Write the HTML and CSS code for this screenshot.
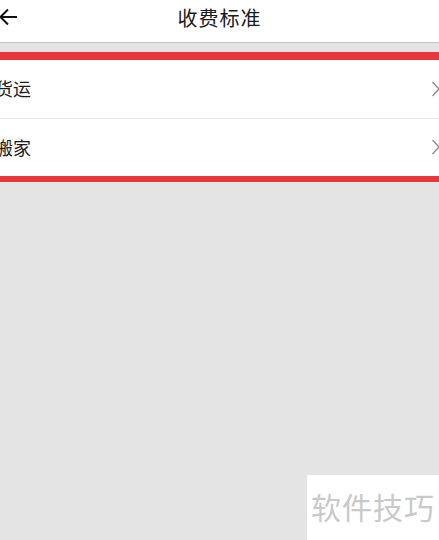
FILE: index.html
```html
<!DOCTYPE html>
<html lang="zh">
<head>
<meta charset="utf-8">
<title>收费标准</title>
<link rel="stylesheet" href="styles.css">
</head>
<body>
<div class="page">
  <header class="header">
    <svg class="back" width="20" height="18" viewBox="0 0 20 18">
      <path d="M18 9H1.5M9 1.5L1.5 9L9 16.5" fill="none" stroke="#111" stroke-width="2"/>
    </svg>
    <h1 class="title">收费标准</h1>
  </header>
  <div class="gap"></div>
  <ul class="list">
    <li class="row"><span class="label">货运</span>
      <svg class="chev" width="8" height="16" viewBox="0 0 8 16"><path d="M0.5 1L7 8L0.5 15" fill="none" stroke="#888" stroke-width="1.3"/></svg>
    </li>
    <li class="row"><span class="label">搬家</span>
      <svg class="chev" width="8" height="16" viewBox="0 0 8 16"><path d="M0.5 1L7 8L0.5 15" fill="none" stroke="#888" stroke-width="1.3"/></svg>
    </li>
  </ul>
  <div class="watermark">软件技巧</div>
</div>
</body>
</html>
```
FILE: styles.css
```css
* { box-sizing: border-box; margin: 0; padding: 0; }
html, body { width: 439px; height: 540px; overflow: hidden; }
body {
  background: #e4e4e4;
  font-family: "Noto Sans CJK SC", "Noto Sans", sans-serif;
}
.page { position: relative; width: 439px; height: 540px; }
.header {
  position: relative;
  height: 43px;
  background: #fff;
  border-bottom: 1px solid #c4c4c4;
  display: flex;
  align-items: center;
  justify-content: center;
}
.back { position: absolute; left: -1px; top: 8px; }
.title {
  font-size: 20px;
  font-weight: 400;
  color: #1a1a1a;
  line-height: 1;
  margin-top: -7px;
  letter-spacing: 1px;
}
.gap { height: 9px; }
.list {
  list-style: none;
  background: #fff;
  border-top: 8px solid #e8383d;
  border-bottom: 6px solid #e8383d;
}
.row {
  height: 58px;
  display: flex;
  align-items: center;
  justify-content: space-between;
}
.row + .row { border-top: 1px solid #e8e8e8; }
.label {
  font-size: 18px;
  color: #1a1a1a;
  margin-left: -5px;
  margin-top: -2px;
  line-height: 1;
}
.chev { margin-right: -1px; margin-top: -1px; }
.watermark {
  position: absolute;
  left: 307px;
  top: 475px;
  width: 132px;
  height: 65px;
  background: #fff;
  color: #c9c9c9;
  font-size: 30px;
  line-height: 62px;
  padding-left: 4px;
  letter-spacing: 1px;
  white-space: nowrap;
}
```
